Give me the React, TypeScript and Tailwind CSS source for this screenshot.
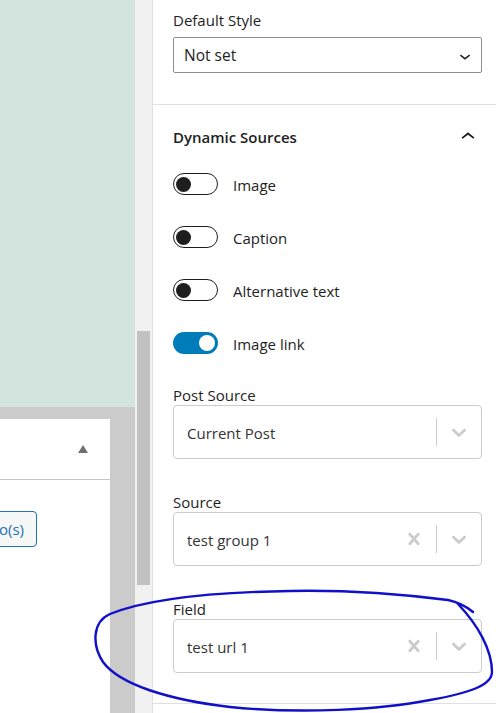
import React from 'react'

function Toggle({ on }: { on: boolean }) {
  return (
    <span
      className={
        on
          ? 'flex h-[22px] w-[45px] shrink-0 items-center justify-end rounded-full bg-[#007cba] px-[3px]'
          : 'flex h-[22px] w-[45px] shrink-0 items-center justify-start rounded-full border border-[#1e1e1e] bg-white px-[2px]'
      }
    >
      <span
        className={
          on
            ? 'h-[16px] w-[16px] rounded-full bg-white'
            : 'h-[15px] w-[15px] rounded-full bg-[#1e1e1e]'
        }
      />
    </span>
  )
}

function CrossIcon() {
  return (
    <svg viewBox="0 0 20 20" className="h-[24px] w-[24px] fill-[#cccccc]">
      <path d="M14.348 14.849c-0.469 0.469-1.229 0.469-1.697 0l-2.651-3.030-2.651 3.029c-0.469 0.469-1.229 0.469-1.697 0-0.469-0.469-0.469-1.229 0-1.697l2.758-3.15-2.759-3.152c-0.469-0.469-0.469-1.228 0-1.697s1.228-0.469 1.697 0l2.652 3.031 2.651-3.031c0.469-0.469 1.228-0.469 1.697 0s0.469 1.229 0 1.697l-2.758 3.152 2.758 3.150c0.469 0.469 0.469 1.229 0 1.698z" />
    </svg>
  )
}

function DropIcon() {
  return (
    <svg viewBox="0 0 20 20" className="h-[24px] w-[24px] fill-[#cccccc]">
      <path d="M4.516 7.548c0.436-0.446 1.043-0.481 1.576 0l3.908 3.747 3.908-3.747c0.533-0.481 1.141-0.446 1.574 0 0.436 0.445 0.408 1.197 0 1.615-0.406 0.418-4.695 4.502-4.695 4.502-0.217 0.223-0.502 0.335-0.787 0.335s-0.57-0.112-0.789-0.335c0 0-4.287-4.084-4.695-4.502s-0.436-1.17 0-1.615z" />
    </svg>
  )
}

function SourceField({
  label,
  value,
  clearable,
  first,
}: {
  label: string
  value: string
  clearable?: boolean
  first?: boolean
}) {
  return (
    <div className={first ? 'mt-[31px]' : 'mt-[33px]'}>
      <div className="text-[15px] leading-[20px] text-[#1e1e1e]">{label}</div>
      <div className="flex h-[54px] items-stretch rounded-[4px] border border-[#cccccc] bg-white">
        <div className="flex flex-1 items-center pl-[13px] pt-[2px] text-[15px] text-[#333333]">{value}</div>
        {clearable && (
          <div className="flex w-[44px] items-center justify-center">
            <CrossIcon />
          </div>
        )}
        <div className="my-[12px] w-px bg-[#cccccc]" />
        <div className="flex w-[44px] items-center justify-center">
          <DropIcon />
        </div>
      </div>
    </div>
  )
}

const toggles = [
  { label: 'Image', on: false },
  { label: 'Caption', on: false },
  { label: 'Alternative text', on: false },
  { label: 'Image link', on: true },
]

export default function App() {
  return (
    <div className="relative flex h-[713px] w-[496px] overflow-hidden bg-white font-['Open_Sans',sans-serif]">
      {/* canvas side */}
      <div className="flex w-[135px] shrink-0 flex-col">
        <div className="h-[407px] bg-[#d3e4de]" />
        <div className="flex flex-1 flex-col bg-[#cbcbcb] pr-[25px] pt-[12px]">
          <div className="flex flex-1 flex-col bg-white">
            <div className="flex h-[61px] items-center justify-end border-b border-[#c3c4c7] pr-[22px]">
              <span className="h-0 w-0 border-x-[5px] border-b-[8px] border-x-transparent border-b-[#6f6f6f]" />
            </div>
            <div className="mt-[31px] flex w-[37px] justify-end overflow-hidden">
              <button className="h-[36px] shrink-0 whitespace-nowrap rounded-[4px] border border-[#2271b1] bg-[#f6f7f7] px-[12px] text-[15px] text-[#2271b1]">
                Add Photo(s)
              </button>
            </div>
          </div>
        </div>
      </div>

      {/* scrollbar */}
      <div className="flex w-[17px] shrink-0 flex-col bg-[#f1f1f1]">
        <div className="h-[331px]" />
        <div className="ml-[2px] h-[254px] w-[13px] bg-[#c1c1c1]" />
      </div>

      {/* settings panel */}
      <div className="flex flex-1 flex-col border-l border-[#e0e0e0] bg-white">
        <div className="border-b border-[#e0e0e0] pb-[31px] pl-[20px] pr-[14px] pt-[10px]">
          <div className="mb-[7px] text-[15px] leading-[20px] text-[#1e1e1e]">Default Style</div>
          <div className="flex h-[36px] items-center justify-between rounded-[2px] border border-[#8c8f94] pl-[10px] pr-[5px] pt-[2px] text-[15.5px] text-[#1e1e1e]">
            <span>Not set</span>
            <svg viewBox="0 0 24 24" className="h-[22px] w-[22px] fill-[#1e1e1e]">
              <path d="M17.5 11.6L12 16l-5.5-4.4.9-1.2L12 14l4.6-3.6 1 1.2z" />
            </svg>
          </div>
        </div>

        <div className="border-b border-[#e0e0e0] pb-[30px] pl-[20px] pr-[14px] pt-[22px]">
          <div className="flex h-[20px] items-center justify-between">
            <span className="text-[15px] font-semibold leading-[20px] text-[#1e1e1e]">Dynamic Sources</span>
            <svg viewBox="0 0 24 24" className="h-[28px] w-[28px] fill-[#1e1e1e]">
              <path d="M6.5 12.4L12 8l5.5 4.4-.9 1.2L12 10l-4.6 3.6-1-1.2z" />
            </svg>
          </div>

          <div className="mt-[26px] flex flex-col gap-[31px]">
            {toggles.map((t) => (
              <div key={t.label} className="flex h-[22px] items-center">
                <Toggle on={t.on} />
                <span className="ml-[15px] pt-[2px] text-[15px] text-[#1e1e1e]">{t.label}</span>
              </div>
            ))}
          </div>

          <SourceField first label="Post Source" value="Current Post" />
          <SourceField label="Source" value="test group 1" clearable />
          <SourceField label="Field" value="test url 1" clearable />
        </div>
      </div>

      {/* hand-drawn annotation */}
      <svg
        viewBox="0 0 496 713"
        className="pointer-events-none absolute left-0 top-0 h-[713px] w-[496px]"
        fill="none"
      >
        <path
          d="M 473 612 Q 462 603 448 600 C 400 594 340 590 290 591 C 220 592 150 598 110 614 C 92 622 92 645 103 662 C 120 685 170 700 230 707 C 300 714 380 710 430 700 C 470 693 492 685 492 672 C 492 650 478 625 458 604"
          stroke="#1010c8"
          strokeWidth="2.4"
          strokeLinecap="round"
          strokeLinejoin="round"
        />
      </svg>
    </div>
  )
}
